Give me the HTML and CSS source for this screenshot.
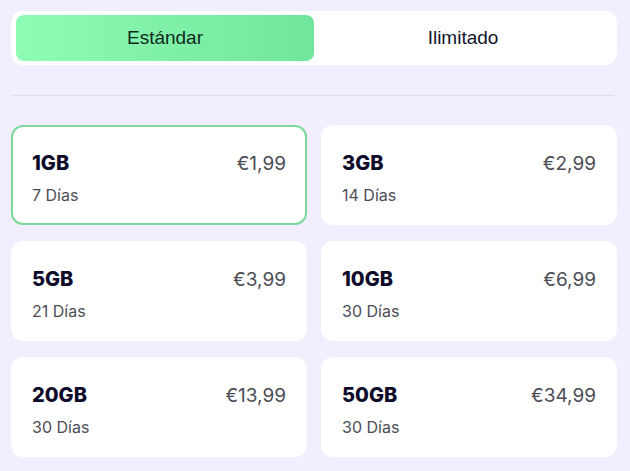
FILE: index.html
```html
<!DOCTYPE html>
<html lang="es">
<head>
<meta charset="utf-8">
<link rel="stylesheet" href="styles.css">
</head>
<body>
<div class="page">
  <div class="tabs">
    <div class="tab active">Estándar</div>
    <div class="tab">Ilimitado</div>
  </div>
  <div class="divider"></div>
  <div class="grid">
    <div class="card selected">
      <div class="row"><span class="gb">1GB</span><span class="price">€1,99</span></div>
      <div class="days">7 Días</div>
    </div>
    <div class="card">
      <div class="row"><span class="gb">3GB</span><span class="price">€2,99</span></div>
      <div class="days">14 Días</div>
    </div>
    <div class="card">
      <div class="row"><span class="gb">5GB</span><span class="price">€3,99</span></div>
      <div class="days">21 Días</div>
    </div>
    <div class="card">
      <div class="row"><span class="gb">10GB</span><span class="price">€6,99</span></div>
      <div class="days">30 Días</div>
    </div>
    <div class="card">
      <div class="row"><span class="gb">20GB</span><span class="price">€13,99</span></div>
      <div class="days">30 Días</div>
    </div>
    <div class="card">
      <div class="row"><span class="gb">50GB</span><span class="price">€34,99</span></div>
      <div class="days">30 Días</div>
    </div>
  </div>
</div>
</body>
</html>
```
FILE: styles.css
```css
* { box-sizing: border-box; }
html, body { margin: 0; padding: 0; }
body {
  background: #f3eefd;
  font-family: Inter, "Liberation Sans", sans-serif;
  width: 630px;
  height: 471px;
  overflow: hidden;
}
.page {
  padding: 11px 13px 0 11px;
}
.tabs {
  background: #ffffff;
  border-radius: 12px;
  padding: 4px 5px;
  display: flex;
  height: 54px;
}
.tab {
  flex: 1;
  display: flex;
  align-items: center;
  justify-content: center;
  font-family: "Liberation Sans", Arial, sans-serif;
  font-size: 19px;
  color: #14142b;
  border-radius: 8px;
}
.tab.active {
  background: linear-gradient(90deg, #8efcb5 0%, #72e59d 100%);
  color: #0f2a1c;
}
.divider {
  height: 1px;
  background: #dcdff4;
  margin: 30px 3px 29px 0;
}
.grid {
  display: grid;
  grid-template-columns: 1fr 1fr;
  column-gap: 14px;
  row-gap: 16px;
}
.card {
  background: #ffffff;
  border-radius: 12px;
  height: 100px;
  padding: 24px 19px 0 19px;
  border: 2px solid transparent;
}
.card.selected {
  border-color: #7cd99b;
}
.row {
  display: flex;
  justify-content: space-between;
  align-items: baseline;
}
.gb {
  font-size: 20px;
  font-weight: 800;
  color: #0e0c2a;
}
.price {
  font-size: 19px;
  color: #4d4d55;
}
.days {
  margin-top: 10px;
  font-size: 16px;
  color: #4d4d55;
}
```
